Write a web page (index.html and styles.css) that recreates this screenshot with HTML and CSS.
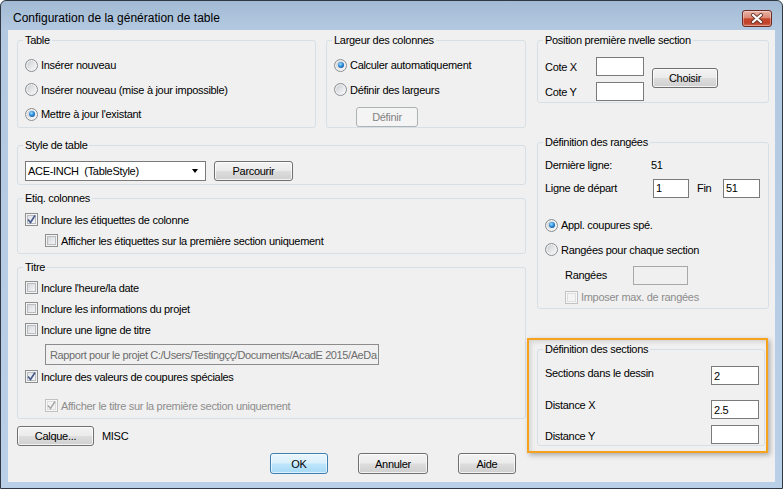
FILE: index.html
```html
<!DOCTYPE html>
<html lang="fr">
<head>
<meta charset="utf-8">
<title>Configuration de la génération de table</title>
<link rel="stylesheet" href="styles.css">
</head>
<body>
<div class="window">
  <div class="titlebar">
    <span class="title">Configuration de la génération de table</span>
    <span class="close">
      <svg width="14" height="11" viewBox="0 0 14 11">
        <path d="M3 2 L11 9 M11 2 L3 9" stroke="#6a3a30" stroke-width="4" stroke-linecap="round" fill="none"/>
        <path d="M3 2 L11 9 M11 2 L3 9" stroke="#ffffff" stroke-width="2.2" stroke-linecap="round" fill="none"/>
      </svg>
    </span>
  </div>
  <div class="client">
    <div class="main">
      <div class="leftcol">
        <div class="toprow">
          <div class="group g-table">
            <span class="legend">Table</span>
            <div class="opt r24"><span class="rb"></span><span>Insérer nouveau</span></div>
            <div class="opt r24"><span class="rb"></span><span>Insérer nouveau (mise à jour impossible)</span></div>
            <div class="opt r24"><span class="rb on"></span><span>Mettre à jour l'existant</span></div>
          </div>
          <div class="group g-width">
            <span class="legend">Largeur des colonnes</span>
            <div class="opt r24"><span class="rb on"></span><span>Calculer automatiquement</span></div>
            <div class="opt r24"><span class="rb"></span><span>Définir des largeurs</span></div>
            <button class="btn disabled b-definir">Définir</button>
          </div>
        </div>
        <div class="group g-style">
          <span class="legend">Style de table</span>
          <div class="style-row">
            <div class="combo"><span class="combo-text">ACE-INCH  (TableStyle)</span><span class="arrow"></span></div>
            <button class="btn b-parcourir">Parcourir</button>
          </div>
        </div>
        <div class="group g-etiq">
          <span class="legend">Etiq. colonnes</span>
          <div class="opt r21"><span class="cb on"><svg width="11" height="11" viewBox="0 0 11 11"><path d="M2 5.5 L4.5 8.5 L9 1.5" stroke="#4a5d8c" stroke-width="1.7" fill="none"/></svg></span><span>Inclure les étiquettes de colonne</span></div>
          <div class="opt r21 indent"><span class="cb"></span><span>Afficher les étiquettes sur la première section uniquement</span></div>
        </div>
        <div class="group g-titre">
          <span class="legend">Titre</span>
          <div class="opt r21"><span class="cb"></span><span>Inclure l'heure/la date</span></div>
          <div class="opt r21"><span class="cb"></span><span>Inclure les informations du projet</span></div>
          <div class="opt r21"><span class="cb"></span><span>Inclure une ligne de titre</span></div>
          <div class="tb tb-disabled tb-rapport">Rapport pour le projet C:/Users/Testingçç/Documents/AcadE 2015/AeDa</div>
          <div class="opt r21 mt1"><span class="cb on"><svg width="11" height="11" viewBox="0 0 11 11"><path d="M2 5.5 L4.5 8.5 L9 1.5" stroke="#4a5d8c" stroke-width="1.7" fill="none"/></svg></span><span>Inclure des valeurs de coupures spéciales</span></div>
          <div class="opt r21 indent mt8 dis"><span class="cb cb-dis"><svg width="11" height="11" viewBox="0 0 11 11"><path d="M2 5.5 L4.5 8.5 L9 1.5" stroke="#a8a8a8" stroke-width="1.5" fill="none"/></svg></span><span>Afficher le titre sur la première section uniquement</span></div>
        </div>
        <div class="calque-row">
          <button class="btn b-calque">Calque...</button>
          <span class="misc">MISC</span>
        </div>
      </div>
      <div class="rightcol">
        <div class="group g-pos">
          <span class="legend">Position première nvelle section</span>
          <div class="pos-row">
            <div class="pos-grid">
              <span class="lbl">Cote X</span><span class="tb tb-pos"></span>
              <span class="lbl">Cote Y</span><span class="tb tb-pos"></span>
            </div>
            <button class="btn b-choisir">Choisir</button>
          </div>
        </div>
        <div class="group g-rows">
          <span class="legend">Définition des rangées</span>
          <div class="line l-last"><span class="w106">Dernière ligne:</span><span>51</span></div>
          <div class="line l-start"><span class="w108">Ligne de départ</span><span class="tb tb-small">1</span><span class="fin">Fin</span><span class="tb tb-small2">51</span></div>
          <div class="opt r245 mt12"><span class="rb on"></span><span>Appl. coupures spé.</span></div>
          <div class="opt r245"><span class="rb"></span><span>Rangées pour chaque section</span></div>
          <div class="line l-rangees"><span class="w68">Rangées</span><span class="tb tb-disabled tb-rangees"></span></div>
          <div class="opt l-imposer dis"><span class="cb cb-dis"></span><span>Imposer max. de rangées</span></div>
        </div>
        <div class="group g-sections">
          <span class="legend">Définition des sections</span>
          <span class="highlight"></span>
          <div class="sec-labels">
            <span class="sl sl1">Sections dans le dessin</span>
            <span class="sl sl2">Distance X</span>
            <span class="sl sl3">Distance Y</span>
          </div>
          <div class="sec-inputs">
            <span class="tb tb-sec">2</span>
            <span class="tb tb-sec si2">2.5</span>
            <span class="tb tb-sec si3"></span>
          </div>
        </div>
      </div>
    </div>
    <div class="footer">
      <button class="btn btn-default b-ok">OK</button>
      <button class="btn b-annuler">Annuler</button>
      <button class="btn b-aide">Aide</button>
    </div>
  </div>
</div>
</body>
</html>
```

FILE: styles.css
```css
* { box-sizing: border-box; }
html, body { margin: 0; padding: 0; }
body {
  width: 783px;
  height: 489px;
  overflow: hidden;
  background: #ffffff;
  font-family: "Liberation Sans", Arial, sans-serif;
  font-size: 11px;
  letter-spacing: -0.3px;
  color: #000;
}
.window {
  width: 783px;
  height: 489px;
  border: 1px solid #2f3944;
  border-radius: 6px 6px 0 0;
  background: linear-gradient(#a3bad4 0px, #b3c9e1 28px, #bad0e9 100%);
  padding: 0 7px 6px;
  display: flex;
  flex-direction: column;
}
.titlebar {
  height: 29px;
  flex: none;
  display: flex;
  justify-content: space-between;
  align-items: flex-start;
}
.title {
  font-size: 12px;
  letter-spacing: 0;
  line-height: 15px;
  margin: 10px 0 0 5px;
}
.close {
  width: 30px;
  height: 17px;
  margin: 9px 3px 0 0;
  border: 1px solid #6b2a22;
  border-radius: 3px;
  background: linear-gradient(#e9b4a7 0%, #dc8a76 45%, #c6462c 52%, #c2412a 80%, #d46a52 100%);
  box-shadow: inset 0 0 0 1px rgba(255, 255, 255, 0.35);
  display: flex;
  align-items: center;
  justify-content: center;
}
.client {
  width: 767px;
  height: 452px;
  background: #f0f0f0;
  display: flex;
  flex-direction: column;
}
.main {
  display: flex;
  gap: 11px;
  padding: 10px 0 0 9px;
}
.leftcol { width: 509px; display: flex; flex-direction: column; }
.rightcol { width: 232px; display: flex; flex-direction: column; }
.toprow { display: flex; gap: 10px; }

.group {
  position: relative;
  border: 1px solid #d5dfe5;
  border-radius: 3px;
  padding-left: 7px;
}
.legend {
  position: absolute;
  top: -7px;
  left: 5px;
  line-height: 13px;
  padding: 0 2px;
  background: #f0f0f0;
  white-space: nowrap;
}
.g-table { width: 299px; height: 88px; padding-top: 12px; }
.g-width { width: 200px; height: 88px; padding-top: 12px; }
.g-style { height: 40px; margin-top: 17px; padding-top: 15px; }
.g-etiq { height: 56px; margin-top: 13px; padding-top: 10px; }
.g-titre { height: 152px; margin-top: 13px; padding-top: 9px; }
.g-pos { height: 63px; padding-top: 16px; }
.g-rows { height: 167px; margin-top: 39px; padding-top: 12px; }
.g-sections {
  width: 228px;
  height: 97px;
  margin-top: 40px;
  padding-right: 5px;
  display: flex;
  justify-content: space-between;
  align-items: flex-start;
}

.opt { display: flex; align-items: center; white-space: nowrap; }
.opt > .rb, .opt > .cb { margin-right: 3px; flex: none; }
.r24 { height: 24.5px; }
.r245 { height: 24.5px; }
.r21 { height: 21px; }
.indent { margin-left: 20px; }
.mt1 { margin-top: 1px; }
.mt8 { margin-top: 8px; }
.mt12 { margin-top: 12px; }
.dis { color: #8d8d8d; }

/* radio */
.rb {
  position: relative;
  width: 13px;
  height: 13px;
  border-radius: 50%;
  border: 1px solid #8b8e91;
  background: linear-gradient(135deg, #c4c8cd 0%, #e6e7e9 55%, #fbfbfb 100%);
  box-shadow: inset 0 0 0 1px #f3f3f3;
}
.rb.on::after {
  content: "";
  position: absolute;
  left: 2.5px;
  top: 2.5px;
  width: 6px;
  height: 6px;
  border-radius: 50%;
  background: radial-gradient(circle at 40% 35%, #9fe0ff 0%, #2c8ad8 45%, #0c3f7e 100%);
}

/* checkbox */
.cb {
  width: 13px;
  height: 13px;
  border: 1px solid #8e8f8f;
  background: linear-gradient(135deg, #c9cdd3 0%, #e8e9eb 55%, #f8f8f8 100%);
  box-shadow: inset 0 0 0 1px #f4f4f4, inset 0 0 0 2px #b8bcc1;
  display: flex;
  align-items: center;
  justify-content: center;
}
.cb.on { background: linear-gradient(135deg, #d9dde3 0%, #eef0f2 55%, #fbfbfb 100%); }
.cb svg { display: block; }
.cb-dis {
  border-color: #c2c2c2;
  background: #f4f4f4;
  box-shadow: inset 0 0 0 1px #f7f7f7, inset 0 0 0 2px #dedede;
}

/* buttons */
.btn {
  font: inherit;
  letter-spacing: -0.3px;
  color: #000;
  padding: 0;
  margin: 0;
  height: 20px;
  border: 1px solid #707070;
  border-radius: 3px;
  background: linear-gradient(#f3f3f3 0%, #ebebeb 48%, #dddddd 52%, #cfcfcf 100%);
  box-shadow: inset 0 0 0 1px rgba(255, 255, 255, 0.75);
  display: flex;
  align-items: center;
  justify-content: center;
  flex: none;
}
.btn.disabled {
  border-color: #adb2b5;
  background: #f4f4f4;
  color: #838383;
  box-shadow: none;
}
.btn-default {
  border-color: #3c7fb1;
  background: linear-gradient(#eaf6fd 0%, #d9f0fc 48%, #bee6fd 52%, #a7d9f5 100%);
  box-shadow: inset 0 0 0 1px rgba(255, 255, 255, 0.6);
}
.b-definir { width: 62px; margin: 5px 0 0 22px; }
.b-parcourir { width: 79px; }
.b-calque { width: 77px; }
.b-choisir { width: 66px; margin-top: 11px; }
.b-ok { width: 58px; height: 21px; }
.b-annuler { width: 70px; height: 21px; }
.b-aide { width: 58px; height: 21px; }

/* combo */
.style-row { display: flex; gap: 8px; }
.combo {
  width: 181px;
  height: 20px;
  border: 1px solid #7a7a7a;
  background: #fff;
  display: flex;
  align-items: center;
  justify-content: space-between;
  padding: 0 7px 0 2px;
}
.combo-text { white-space: pre; }
.arrow {
  width: 0;
  height: 0;
  border-left: 3.5px solid transparent;
  border-right: 3.5px solid transparent;
  border-top: 4px solid #000;
}

/* text boxes */
.tb {
  height: 19px;
  border: 1px solid #7a7a7a;
  background: #fff;
  display: flex;
  align-items: center;
  padding-left: 2px;
  white-space: nowrap;
  overflow: hidden;
  flex: none;
}
.tb-disabled { background: #f0f0f0; color: #6d6d6d; border-color: #8c8c8c; }
.tb-rapport { width: 334px; height: 21px; margin: 4px 0 0 20px; padding-left: 4px; letter-spacing: -0.4px; }
.tb-pos { width: 48px; }
.tb-small { width: 36px; }
.tb-small2 { width: 37px; }
.tb-rangees { width: 55px; border-color: #a8a8a8; }
.tb-sec { width: 48px; }

.calque-row { display: flex; align-items: center; gap: 8px; margin-top: 7px; height: 20px; }

.pos-row { display: flex; align-items: flex-start; gap: 8px; }
.pos-grid {
  display: grid;
  grid-template-columns: 51px 48px;
  row-gap: 6px;
  align-items: center;
}

.line { display: flex; align-items: center; white-space: nowrap; }
.l-last { height: 20px; }
.l-start { height: 26px; }
.l-rangees { height: 22px; margin: 2px 0 0 20px; }
.l-imposer { height: 18px; margin: 2px 0 0 20px; }
.w106 { width: 106px; }
.w108 { width: 108px; }
.w68 { width: 68px; }
.fin { width: 34px; padding-left: 8px; }

.sec-labels { display: flex; flex-direction: column; padding-top: 16px; }
.sl { line-height: 14px; white-space: nowrap; }
.sl2 { margin-top: 18px; }
.sl3 { margin-top: 17px; }
.sec-inputs { display: flex; flex-direction: column; padding-top: 16px; }
.si2 { margin-top: 15px; }
.si3 { margin-top: 6px; }

.highlight {
  position: absolute;
  left: -11px;
  top: -12px;
  right: -4px;
  bottom: -8px;
  border: 2px solid #f7a21c;
  box-shadow: 2px 2px 5px rgba(0, 0, 0, 0.3), inset 2px 2px 4px rgba(0, 0, 0, 0.12);
  pointer-events: none;
}

.footer {
  display: flex;
  justify-content: center;
  gap: 30px;
  margin-top: 7px;
  padding-left: 3px;
}
```
